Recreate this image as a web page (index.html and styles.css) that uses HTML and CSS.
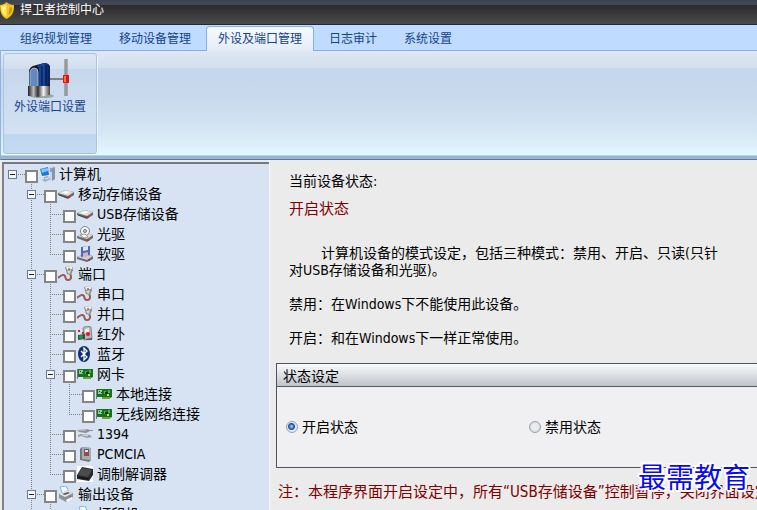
FILE: index.html
```
<!DOCTYPE html>
<html lang="zh-CN">
<head>
    <meta charset="UTF-8">
    <meta name="viewport" content="width=device-width, initial-scale=1">
    <title>捍卫者控制中心</title>
    <link rel="stylesheet" href="styles.css">
</head>
<body>

<!-- Icons for the tree -->
<svg class="sprite" aria-hidden="true">
    <symbol id="i-pc" viewBox="0 0 16 16">
        <path d="M10 1l4-1 2 1v12l-3 2-3-2z" fill="#cdd6e0"/>
        <path d="M13 2l3-1v12l-3 2z" fill="#8496aa"/>
        <path d="M11 3h2M11 5h2" stroke="#3d6da8"/>
        <path d="M0 2l10-2 1 10-9 1z" fill="#dfe9f2"/>
        <path d="M1 3l8-2 1 8-7 1z" fill="#1f74dc"/>
        <path d="M2 3l7-1v3l-6 2z" fill="#7cc4ff"/>
        <path d="M5 11l4-1 1 2 2 1-6 3-3-2 2-1z" fill="#9fb0c2"/>
        <path d="M6 13l4-1" stroke="#e8eef4"/>
    </symbol>
    <symbol id="i-drive" viewBox="0 0 16 16">
        <path d="M0 7l7-3 9 2v3l-6 4-10-4z" fill="#6c6c6c"/>
        <path d="M0 7l7-3 9 2-6 4z" fill="#dcdcdc"/>
        <path d="M3 7l5-2 4 1-4 2z" fill="#f8f8f8"/>
        <path d="M1 9l9 3" stroke="#444"/>
        <path d="M10 10h2v2h-2z" fill="#d8262c"/>
    </symbol>
    <symbol id="i-cd" viewBox="0 0 16 16">
        <path d="M0 10l7-3 9 2v3l-6 4-10-4z" fill="#6c6c6c"/>
        <path d="M0 10l7-3 9 2-6 4z" fill="#dedede"/>
        <path d="M10 13h2v2h-2z" fill="#d8262c"/>
        <circle cx="8" cy="5" r="4.5" fill="#f4f4f6" stroke="#888"/>
        <circle cx="8" cy="5" r="1.5" fill="#c4ccd8" stroke="#777"/>
        <path d="M3 9l5-1 3 3-4 1z" fill="#fff" stroke="#999"/>
    </symbol>
    <symbol id="i-floppy" viewBox="0 0 16 16">
        <path d="M0 11l7-3 9 2v3l-6 3-10-3z" fill="#6c6c6c"/>
        <path d="M0 11l7-3 9 2-6 4z" fill="#cfcfcf"/>
        <path d="M4 1l9-1v9l-9 2z" fill="#5466b4"/>
        <path d="M6 1l5-1v4l-5 1z" fill="#dfe5f6"/>
        <path d="M6 7l5-1v4l-5 1z" fill="#c8b4c8"/>
        <path d="M11 13h2v2h-2z" fill="#d8262c"/>
    </symbol>
    <symbol id="i-cable" viewBox="0 0 16 16">
        <path d="M0 12c3-3 6-4 7-2s0 4 3 4 4-3 2-6" fill="none" stroke="#666" stroke-width="2"/>
        <path d="M0 12c3-3 6-4 7-2s0 4 3 4 4-3 2-6" fill="none" stroke="#e8483a"/>
        <path d="M7 1l7-1 1 4-2 5-4-1z" fill="#8c8882"/>
        <path d="M8 1l6-1v3l-5 1z" fill="#f1eee8"/>
        <path d="M9 5l4-1-1 4-2-1z" fill="#d9d4cc"/>
        <path d="M10 3h2" stroke="#444"/>
    </symbol>
    <symbol id="i-ir" viewBox="0 0 16 16">
        <path d="M6 2l3-2 5 1 1 12-8 1z" fill="#b7b7b5" stroke="#888"/>
        <path d="M8 3l4-1v4l-4 1z" fill="#eee"/>
        <path d="M1 9l7-1v5l-7 1z" fill="#3d4b45"/>
        <path d="M1 4h2v2H1zM5 6h2v2H5z" fill="#d22"/>
        <circle cx="4" cy="11" r="2" fill="#1a9a52"/>
        <circle cx="11" cy="8" r="2" fill="#d4202a"/>
        <path d="M9 13l6-1v2H9z" fill="#555"/>
    </symbol>
    <symbol id="i-bt" viewBox="0 0 16 16">
        <ellipse cx="7" cy="8" rx="6" ry="8" fill="#0c2f78"/>
        <path d="M4 5l6 6-3 3V2l3 3-6 6" fill="none" stroke="#fff" stroke-width="1.3"/>
    </symbol>
    <symbol id="i-nic" viewBox="0 0 16 16">
        <path d="M0 3h1v10H0z" fill="#777"/>
        <path d="M1 3h15v8l-2 1v1H6v-2H1z" fill="#15731f"/>
        <path d="M2 4h4v4H2z" fill="#8fd08a"/>
        <path d="M3 5h1v1H3zM5 6h1v1H5z" fill="#164d1a"/>
        <path d="M8 5h2v3H8zM12 4h2v3h-2z" fill="#45b34b"/>
        <path d="M9 6h3v2H9z" fill="#102f13"/>
        <path d="M11 8h2v2h-2z" fill="#e0d34c"/>
        <path d="M6 12h8" stroke="#d8c860"/>
    </symbol>
    <symbol id="i-1394" viewBox="0 0 16 16">
        <path d="M0 4l9-1 4 1h3v1h-3l-4 2-7-1z" fill="#8c8f90"/>
        <path d="M1 4h8" stroke="#d8d8d8"/>
        <path d="M1 9l3-1 9 1 2 2-5 1-6-2-3 1z" fill="#9a9a98"/>
        <path d="M5 9l6 1" stroke="#ddd"/>
    </symbol>
    <symbol id="i-card" viewBox="0 0 16 16">
        <path d="M3 3l2-2 9 1v12l-2 2-9-2z" fill="#777"/>
        <path d="M5 1l9 1v12l-9-1z" fill="#a9abad"/>
        <path d="M7 3h5v7H7z" fill="#58606c"/>
        <path d="M8 4h3v2H8z" fill="#dfe3e8"/>
        <path d="M8 6h3v3H8z" fill="#c33"/>
    </symbol>
    <symbol id="i-modem" viewBox="0 0 16 16">
        <path d="M0 0h16v16H0z" fill="#fff"/>
        <path d="M0 9l5-8 11 2v6l-4 6-12-2z" fill="#26282a"/>
        <path d="M1 9l4-7 10 2-4 7z" fill="#4a4d50"/>
        <path d="M1 11l10 2" stroke="#111"/>
    </symbol>
    <symbol id="i-printer" viewBox="0 0 16 16">
        <path d="M2 1l6-1 3 6-6 3z" fill="#f4faff" stroke="#7fb0e0"/>
        <path d="M1 8l9-4 5 3v5l-7 4-7-4z" fill="#8d9198"/>
        <path d="M1 8l9-4 5 3-8 4z" fill="#e4e6ea"/>
        <path d="M4 8l6-2 2 1-5 2z" fill="#555a62"/>
        <path d="M8 14l6-3 1 1-6 4z" fill="#fff"/>
        <path d="M12 10h1v1h-1z" fill="#d33"/>
    </symbol>
</svg>

<header class="titlebar">
    <svg class="shield" viewBox="0 0 16 18" aria-hidden="true">
        <path d="M0 3c3 0 5-1 7-3 2 2 4 3 8 3 0 7-1 11-8 15C1 15 0 10 0 3z" fill="#e8bc1c"/>
        <path d="M1 4c3 0 4-1 6-2v14C2 13 1 9 1 4z" fill="#ffe95e"/>
        <path d="M8 3c2 1 3 2 6 2 0 5-2 8-6 11z" fill="#f2cf2c"/>
        <path d="M10 5l3 1c0 4-1 6-4 8z" fill="#cf9a10"/>
        <path d="M3 6l3-1-3 6z" fill="#fffbd0"/>
    </svg>
    <h1>捍卫者控制中心</h1>
</header>

<nav class="tabs">
    <button class="tab" type="button">组织规划管理</button>
    <button class="tab" type="button">移动设备管理</button>
    <button class="tab active" type="button">外设及端口管理</button>
    <button class="tab" type="button">日志审计</button>
    <button class="tab" type="button">系统设置</button>
</nav>

<div class="ribbon">
    <div class="ribbon-group">
        <button class="ribbon-btn" type="button">
            <svg viewBox="0 0 44 40" aria-hidden="true">
                <defs>
                    <linearGradient id="metal">
                        <stop offset="0" stop-color="#222"/>
                        <stop offset=".25" stop-color="#bbb"/>
                        <stop offset=".45" stop-color="#333"/>
                        <stop offset=".7" stop-color="#f4f4f4"/>
                        <stop offset="1" stop-color="#444"/>
                    </linearGradient>
                    <linearGradient id="body">
                        <stop offset="0" stop-color="#0b2f7c"/>
                        <stop offset=".5" stop-color="#1a4fa8"/>
                        <stop offset="1" stop-color="#061b50"/>
                    </linearGradient>
                </defs>
                <ellipse cx="14" cy="37" rx="12" ry="2" fill="#9aa4b0"/>
                <path d="M1 29V12q1-4 4-5l11-3q5 0 6 4v20z" fill="#10131c"/>
                <path d="M2 28V13q1-4 4-4 4 0 4 4v15z" fill="#6488c0" stroke="#a9b9d0"/>
                <path d="M11 28V12q0-4-3-5l8-3q5 0 6 4v18z" fill="url(#body)"/>
                <path d="M14 7v20M18 6v20" stroke="#05102e"/>
                <path d="M0 27h22v9l-12 2-10-1z" fill="url(#metal)"/>
                <path d="M22 20h15" stroke="#555" stroke-width="2"/>
                <path d="M22 20h15" stroke="#aaa"/>
                <path d="M38 0v37" stroke="#777" stroke-width="3"/>
                <path d="M38 0v37" stroke="#bbb"/>
                <path d="M35 16h6v8h-6z" fill="#e81010"/>
                <path d="M36 17h2v6h-2z" fill="#ff6a50"/>
            </svg>
            <span>外设端口设置</span>
        </button>
    </div>
</div>

<main>
    <aside class="tree">
        <ul class="root">
            <li>
                <div class="node"><button class="toggle" type="button" aria-label="折叠"></button><label><input type="checkbox"><svg><use href="#i-pc"/></svg>计算机</label></div>
                <ul>
                    <li>
                        <div class="node"><button class="toggle" type="button" aria-label="折叠"></button><label><input type="checkbox"><svg><use href="#i-drive"/></svg>移动存储设备</label></div>
                        <ul>
                            <li><div class="node leaf"><label><input type="checkbox"><svg><use href="#i-drive"/></svg>USB存储设备</label></div></li>
                            <li><div class="node leaf"><label><input type="checkbox"><svg><use href="#i-cd"/></svg>光驱</label></div></li>
                            <li><div class="node leaf"><label><input type="checkbox"><svg><use href="#i-floppy"/></svg>软驱</label></div></li>
                        </ul>
                    </li>
                    <li>
                        <div class="node"><button class="toggle" type="button" aria-label="折叠"></button><label><input type="checkbox"><svg><use href="#i-cable"/></svg>端口</label></div>
                        <ul>
                            <li><div class="node leaf"><label><input type="checkbox"><svg><use href="#i-cable"/></svg>串口</label></div></li>
                            <li><div class="node leaf"><label><input type="checkbox"><svg><use href="#i-cable"/></svg>并口</label></div></li>
                            <li><div class="node leaf"><label><input type="checkbox"><svg><use href="#i-ir"/></svg>红外</label></div></li>
                            <li><div class="node leaf"><label><input type="checkbox"><svg><use href="#i-bt"/></svg>蓝牙</label></div></li>
                            <li>
                                <div class="node"><button class="toggle" type="button" aria-label="折叠"></button><label><input type="checkbox"><svg><use href="#i-nic"/></svg>网卡</label></div>
                                <ul>
                                    <li><div class="node leaf"><label><input type="checkbox"><svg><use href="#i-nic"/></svg>本地连接</label></div></li>
                                    <li><div class="node leaf"><label><input type="checkbox"><svg><use href="#i-nic"/></svg>无线网络连接</label></div></li>
                                </ul>
                            </li>
                            <li><div class="node leaf"><label><input type="checkbox"><svg><use href="#i-1394"/></svg>1394</label></div></li>
                            <li><div class="node leaf"><label><input type="checkbox"><svg><use href="#i-card"/></svg>PCMCIA</label></div></li>
                            <li><div class="node leaf"><label><input type="checkbox"><svg><use href="#i-modem"/></svg>调制解调器</label></div></li>
                        </ul>
                    </li>
                    <li class="more">
                        <div class="node"><button class="toggle" type="button" aria-label="折叠"></button><label><input type="checkbox"><svg><use href="#i-printer"/></svg>输出设备</label></div>
                        <ul>
                            <li><div class="node leaf"><label><input type="checkbox"><svg><use href="#i-printer"/></svg>打印机</label></div></li>
                        </ul>
                    </li>
                </ul>
            </li>
        </ul>
    </aside>

    <section class="detail">
        <div class="info">
            <h2>当前设备状态:</h2>
            <p class="state">开启状态</p>
            <p class="intro">计算机设备的模式设定，包括三种模式：禁用、开启、只读(只针对USB存储设备和光驱)。</p>
            <p>禁用：在Windows下不能使用此设备。</p>
            <p>开启：和在Windows下一样正常使用。</p>
        </div>

        <fieldset class="box">
            <legend>状态设定</legend>
            <div class="choices">
                <label><input type="radio" name="state" checked>开启状态</label>
                <label><input type="radio" name="state">禁用状态</label>
            </div>
        </fieldset>

        <p class="note">注：本程序界面开启设定中，所有“USB存储设备”控制暂停，关闭界面设定</p>
    </section>
</main>

<div class="watermark">最需教育</div>

</body>
</html>
```
FILE: styles.css
```
* { box-sizing: border-box; }
body {
  margin: 0;
  height: 100vh;
  display: flex;
  flex-direction: column;
  overflow: hidden;
  position: relative;
  font-family: "DejaVu Sans Condensed", "Noto Sans CJK SC", sans-serif;
  font-size: 14px;
  color: #000;
  background: #ebebeb;
}
button, input { font: inherit; margin: 0; padding: 0; }
button { border: none; background: none; cursor: pointer; }
h1, h2, p, ul { margin: 0; padding: 0; font-weight: normal; }
.sprite { display: none; }

/* Title bar */
.titlebar {
  flex: none;
  display: flex;
  align-items: center;
  gap: 5px;
  height: 25px;
  padding-bottom: 4px;
  border-bottom: 1px solid #2b2630;
  background: linear-gradient(#3d4251 0, #444958 5px, #2b2b2b 5px, #4b4b4b 100%);
}
.titlebar h1 { font-size: 12px; line-height: 16px; color: #fff; }
.shield { width: 15px; height: 17px; }

/* Tabs */
.tabs {
  flex: none;
  display: flex;
  align-items: flex-end;
  gap: 3px;
  height: 26px;
  padding-left: 8px;
  background: #bfdbff;
  box-shadow: inset 0 -1px #86ade0;
}
.tab {
  height: 25px;
  padding: 0 11px;
  border: 1px solid transparent;
  border-bottom: none;
  font-size: 12px;
  line-height: 24px;
  color: #15428b;
}
.tab.active {
  border-color: #86b0e4;
  border-radius: 4px 4px 0 0;
  background: linear-gradient(#f6faff, #e3ecf7);
}

/* Ribbon */
.ribbon {
  flex: none;
  height: 109px;
  padding: 2px;
  border-bottom: 1px solid #6f7380;
  border-left: 1px solid #8db2e3;
  background: linear-gradient(#dfe8f4 0, #d3dfee 17px, #c5d6ed 17px, #c9daee 50px, #d6e6f3 80px, #e2f8ff 104px, #8fb1d8 105px, #9ebbdc 108px);
}
.ribbon-group {
  width: 94px;
  height: 101px;
  border: 1px solid #a9c4e2;
  border-radius: 3px;
  box-shadow: 1px 1px #eff6fd;
  background: linear-gradient(#dee8f5 0, #d1deef 15px, #c6d7ed 15px, #d2e2f3 80px, #c0d7f0 80px, #c4daf2 100%);
}
.ribbon-btn {
  display: flex;
  flex-direction: column;
  align-items: center;
  width: 100%;
  padding-top: 5px;
  font-size: 12px;
  line-height: 16px;
  color: #15428b;
}
.ribbon-btn svg { width: 44px; height: 40px; }

main { flex: 1; display: flex; min-height: 0; }

/* Device tree */
.tree {
  flex: none;
  width: 267px;
  margin: 2px 0 0 2px;
  padding-left: 4px;
  overflow: hidden;
  border-top: 2px solid #77797c;
  border-left: 2px solid #808488;
  background: #d7e3f3;
}
.tree ul { list-style: none; }
.tree li > ul { margin-left: 19px; }
/* dotted line running down through the toggles */
.tree ul ul > li {
  background: repeating-linear-gradient(#808080 0 1px, transparent 1px 2px) 4px 0 / 1px 100% no-repeat;
}
.tree ul ul > li:last-child { background-size: 1px 10px; }
.tree ul ul > li.more { background-size: 1px 100%; }
.node {
  display: flex;
  align-items: center;
  gap: 8px;
  height: 20px;
  background: repeating-linear-gradient(90deg, #808080 0 1px, transparent 1px 2px) 4px 10px / 13px 1px no-repeat;
}
.node.leaf { padding-left: 17px; }
.node label {
  display: flex;
  align-items: center;
  line-height: 20px;
  white-space: nowrap;
}
.node input {
  appearance: none;
  width: 13px;
  height: 13px;
  margin-top: 4px;
  border: 2px solid #858585;
  background: #fff;
}
.node svg { width: 16px; height: 16px; margin: 0 4px 0 1px; }
.toggle {
  width: 9px;
  height: 9px;
  border: 1px solid #6f7b88;
  background: linear-gradient(#222, #222) 1px 3px / 5px 1px no-repeat #f2f5fa;
}

/* Right side */
.detail {
  flex: 1;
  min-width: 0;
  padding: 11px 0 0 6px;
  overflow: hidden;
  border-left: 1px solid #f8f8f8;
}
.info { padding-left: 13px; line-height: 17px; }
.info h2 { font-size: 14px; line-height: 20px; }
.info p { margin-bottom: 17px; }
.info .state {
  margin: 8px 0 26px;
  font-size: 15px;
  line-height: 20px;
  color: #800000;
}
.info .intro { max-width: 435px; text-indent: 32px; }
.info p:last-child { margin-bottom: 16px; }
.box {
  min-width: 0;
  margin: 0;
  padding: 0;
  border: 1px solid #4e535f;
  border-right: none;
  background: #f0f0f3;
}
.box legend {
  float: left;
  width: 100%;
  height: 23px;
  padding-left: 6px;
  border-bottom: 1px solid #4e5b68;
  background: linear-gradient(#fafbfb, #e2e5e8 40%, #bfc4c9);
  line-height: 24px;
}
.choices {
  clear: both;
  display: grid;
  grid-template-columns: 243px 1fr;
  padding: 30px 9px;
}
.choices label {
  display: flex;
  align-items: center;
  gap: 4px;
  line-height: 20px;
}
.choices input {
  appearance: none;
  width: 12px;
  height: 12px;
  border: 1px solid #9aa3a8;
  border-radius: 50%;
  background: radial-gradient(circle, #e9ebec 40%, #c9cfd3);
}
.choices input:checked {
  background: radial-gradient(circle at 45% 45%, #b4dcf8 0, #3a7cc6 2px, #1c4f96 3px, #e4eaf0 4px);
}
.note {
  padding: 14px 0 0 2px;
  font-size: 15px;
  line-height: 20px;
  white-space: nowrap;
  color: #800000;
}

.watermark {
  position: absolute;
  right: 7px;
  bottom: 11px;
  font-size: 28px;
  line-height: 40px;
  color: #0a0af0;
  text-shadow: 2px 0 #fff, -2px 0 #fff, 0 2px #fff, 0 -2px #fff, 1px 1px #fff, -1px -1px #fff, 1px -1px #fff, -1px 1px #fff, 2px 2px #fff, -2px -2px #fff;
}
```
